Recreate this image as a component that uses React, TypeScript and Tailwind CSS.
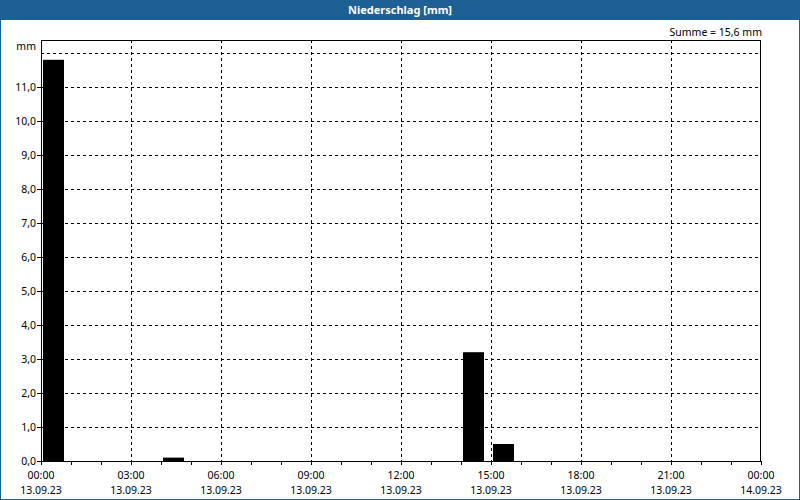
const X0 = 41
const Y0 = 461
const PX_H = 30
const PX_U = 34

const bars: [number, number][] = [
  [0, 11.8],
  [4, 0.1],
  [14, 3.2],
  [15, 0.5],
]

const xLabels = [
  ['00:00', '13.09.23'],
  ['03:00', '13.09.23'],
  ['06:00', '13.09.23'],
  ['09:00', '13.09.23'],
  ['12:00', '13.09.23'],
  ['15:00', '13.09.23'],
  ['18:00', '13.09.23'],
  ['21:00', '13.09.23'],
  ['00:00', '14.09.23'],
]

export default function App() {
  const yTicks = Array.from({ length: 12 }, (_, i) => i)
  return (
    <div className="flex h-[500px] w-[800px] flex-col bg-[#1c6094] font-['DejaVu_Sans',sans-serif]">
      <div className="flex h-[20px] items-center justify-center text-[11px] font-bold text-white">
        Niederschlag [mm]
      </div>
      <div className="mx-px mb-px flex-1 bg-white">
        <svg width="798" height="479" viewBox="1 20 798 479" className="block text-[10.5px]">
          {/* grid */}
          {yTicks.slice(1).map((v) => (
            <line key={v} x1={X0} x2={X0 + 720} y1={Y0 - v * PX_U + 0.5} y2={Y0 - v * PX_U + 0.5} stroke="#000" strokeDasharray="3 3" />
          ))}
          <line x1={X0} x2={X0 + 720} y1={53.5} y2={53.5} stroke="#000" strokeDasharray="3 3" />
          {[1, 2, 3, 4, 5, 6, 7].map((i) => (
            <line key={i} x1={X0 + i * 90 + 0.5} x2={X0 + i * 90 + 0.5} y1={40} y2={Y0} stroke="#000" strokeDasharray="3 3" />
          ))}
          {/* bars */}
          {bars.map(([h, v]) => (
            <rect key={h} x={X0 + h * PX_H + 2} y={Y0 - v * PX_U} width={21} height={v * PX_U} fill="#000" />
          ))}
          {/* frame */}
          <rect x={X0 + 0.5} y={40.5} width={719} height={Y0 - 40} fill="none" stroke="#000" />
          {/* y ticks & labels */}
          {yTicks.map((v) => (
            <g key={v}>
              <line x1={37} x2={X0} y1={Y0 - v * PX_U + 0.5} y2={Y0 - v * PX_U + 0.5} stroke="#000" />
              <text x={36} y={Y0 - v * PX_U + 4} textAnchor="end" fill="#000">
                {v.toFixed(1).replace('.', ',')}
              </text>
            </g>
          ))}
          <text x={36} y={50} textAnchor="end" fill="#000">mm</text>
          {/* x ticks */}
          {Array.from({ length: 25 }, (_, h) => (
            <line key={h} x1={X0 + h * PX_H + 0.5} x2={X0 + h * PX_H + 0.5} y1={Y0} y2={Y0 + 4} stroke="#000" />
          ))}
          {xLabels.map(([t, d], i) => (
            <g key={i}>
              <text x={X0 + i * 90} y={479} textAnchor="middle" fill="#000">{t}</text>
              <text x={X0 + i * 90} y={494} textAnchor="middle" fill="#000">{d}</text>
            </g>
          ))}
          <text x={762} y={36} textAnchor="end" fill="#000">Summe = 15,6 mm</text>
        </svg>
      </div>
    </div>
  )
}
